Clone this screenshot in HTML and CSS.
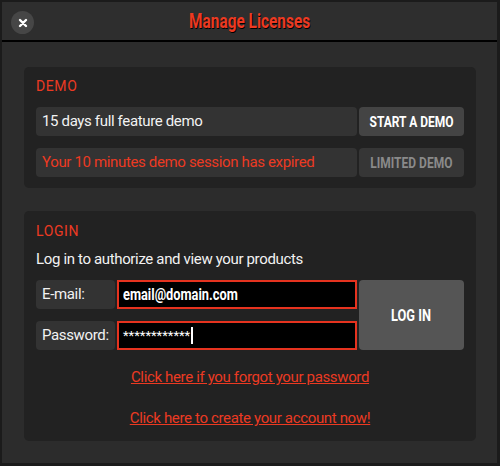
FILE: index.html
```html
<!DOCTYPE html>
<html lang="en">
<head>
  <meta charset="UTF-8">
  <meta name="viewport" content="width=device-width, initial-scale=1.0">
  <title>Manage Licenses</title>
  <link rel="stylesheet" href="styles.css">
</head>
<body>
  <div class="window">
    <header>
      <button class="close-button" aria-label="Close">
        <svg width="10" height="10" viewBox="0 0 10 10">
          <path d="M2 2 L8 8 M8 2 L2 8" stroke="#fff" stroke-width="2.4" stroke-linecap="round"/>
        </svg>
      </button>
      <h1><span class="narrow">Manage Licenses</span></h1>
    </header>

    <div class="content">
      <!-- Demo section -->
      <section class="panel demo">
        <h2>DEMO</h2>
        <div class="row">
          <div class="field">15 days full feature demo</div>
          <button class="action"><span class="narrow">START A DEMO</span></button>
        </div>
        <div class="row">
          <div class="field warning">Your 10 minutes demo session has expired</div>
          <button class="action disabled"><span class="narrow">LIMITED DEMO</span></button>
        </div>
      </section>

      <!-- Login section -->
      <section class="panel login">
        <h2>LOGIN</h2>
        <p class="intro">Log in to authorize and view your products</p>
        <form class="login-form">
          <label for="email">E-mail:</label>
          <div class="input" id="email"><span class="narrow">email@domain.com</span></div>
          <button type="button" class="login-button"><span class="narrow">LOG IN</span></button>
          <label for="password">Password:</label>
          <div class="input password" id="password">************<span class="caret"></span></div>
        </form>
        <div class="links">
          <a href="#">Click here if you forgot your password</a>
          <a href="#">Click here to create your account now!</a>
        </div>
      </section>
    </div>
  </div>
</body>
</html>
```

FILE: styles.css
```css
body {
  margin: 0;
  padding: 0;
  background-color: #2c2c2c;
  font-family: Roboto, "DejaVu Sans", sans-serif;
  letter-spacing: -0.35px;
  color: #f2f2f2;
}

.window {
  width: 500px;
  height: 466px;
  box-sizing: border-box;
  border: 2px solid #1b1b1b;
  border-bottom-width: 3px;
  border-right-width: 3px;
  background-color: #2c2c2c;
}

/* no condensed face is installed, so squeeze the bold one */
.narrow {
  display: inline-block;
  transform: scaleX(0.8);
  white-space: nowrap;
}

header h1, .action, .login-button, .input {
  font-family: Roboto, sans-serif;
  font-weight: bold;
  letter-spacing: 0;
}

header {
  position: relative;
  height: 38px;
  border-bottom: 2px solid #000;
  background-color: #2e2e2e;
  display: flex;
  align-items: center;
  justify-content: center;
}

header h1 {
  margin: 0;
  font-size: 20px;
  color: #ec3a22;
  text-shadow: 1px 1px 0 #000;
}

header h1 .narrow {
  transform: scaleX(0.77);
}

.close-button {
  position: absolute;
  left: 9px;
  top: 9px;
  width: 23px;
  height: 23px;
  padding: 0;
  border: none;
  border-radius: 50%;
  background-color: #464646;
  display: flex;
  align-items: center;
  justify-content: center;
}

.content {
  padding: 25px 21px 0 22px;
  display: flex;
  flex-direction: column;
  gap: 23px;
}

.panel {
  background-color: #222;
  border-radius: 5px;
  padding: 10px 12px 11px;
}

.panel h2 {
  margin: 0 0 12px;
  font-size: 14px;
  line-height: 18px;
  font-weight: normal;
  letter-spacing: 0.6px;
  color: #ec3a22;
}

.row {
  display: flex;
  gap: 2px;
  height: 29px;
}

.row + .row {
  margin-top: 12px;
}

.field {
  flex: 1;
  background-color: #333;
  border-radius: 4px;
  padding: 0 6px;
  font-size: 15px;
  line-height: 29px;
}

.field.warning {
  color: #ec3a22;
}

.action, .login-button {
  width: 105px;
  border: none;
  border-radius: 4px;
  background-color: #444;
  color: #fff;
  padding: 0;
  font-size: 15px;
}

.action.disabled {
  background-color: #363636;
  color: #8a8a8a;
}

.login {
  padding-top: 11px;
  padding-bottom: 14px;
}

.intro {
  margin: -2px 0 12px;
  font-size: 15px;
  line-height: 18px;
}

.login-form {
  display: grid;
  grid-template-columns: 79px 240px 105px;
  grid-template-rows: 29px 29px;
  column-gap: 2px;
  row-gap: 12px;
}

.login-form label {
  background-color: #333;
  border-radius: 4px;
  padding: 0 6px;
  font-size: 15px;
  line-height: 29px;
}

.input {
  box-sizing: border-box;
  background-color: #000;
  color: #fff;
  border: 2px solid #e6331f;
  padding: 0 4px;
  font-size: 16px;
  line-height: 25px;
}

.input .narrow {
  transform-origin: left center;
}

.password {
  font-weight: normal;
  font-size: 13px;
}

.caret {
  display: inline-block;
  width: 2px;
  height: 17px;
  margin-left: 1px;
  vertical-align: -4px;
  background-color: #fff;
}

.login-button {
  grid-column: 3;
  grid-row: 1 / span 2;
  background-color: #555;
  font-size: 16px;
}

.links {
  display: flex;
  flex-direction: column;
  align-items: center;
  gap: 23px;
  margin-top: 18px;
}

.links a {
  color: #ec3a22;
  font-size: 15px;
  line-height: 18px;
}
```
